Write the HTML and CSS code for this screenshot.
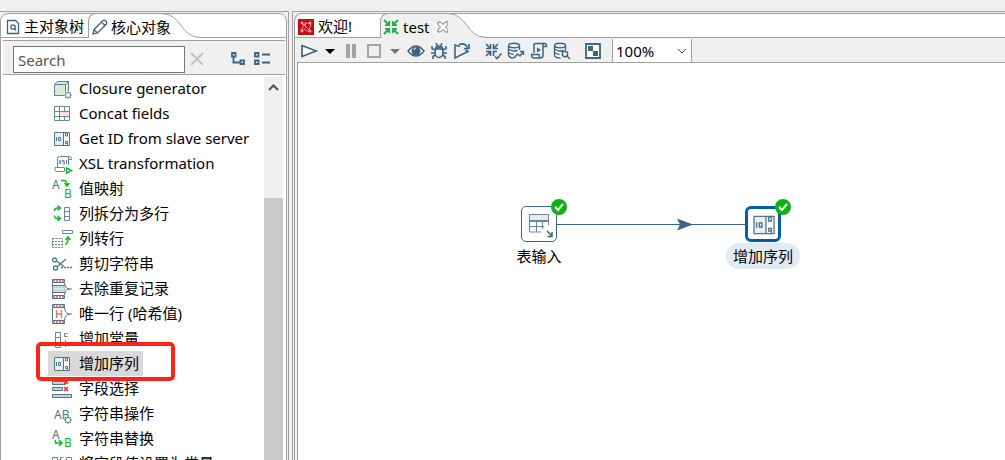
FILE: index.html
```html
<!DOCTYPE html>
<html lang="zh-CN">
<head>
<meta charset="utf-8">
<title>test</title>
<link rel="stylesheet" href="styles.css">
</head>
<body>
<svg class="defs" aria-hidden="true">
  <symbol id="id-box" viewBox="0 0 24 24"><path d="M4.500 5.500h15v13h-15z" fill="#fff"/><path d="M5 6h8v12H5z" fill="#e6eff5"/><path d="M4.500 5.500h15v13h-15zM13.500 5v14" fill="none" stroke="#52758e"/><path d="M6.500 10v4M8.500 10.500h2v3h-2zM15.500 6v3h2V6zM15.500 14.500h2v2h-2zM17.500 14v4" fill="none" stroke="#52758e"/></symbol>
  <symbol id="curve" viewBox="0 0 38 25"><path class="curve-fill" d="M0 .5C20 1 18 24 38 24.500V25H0z"/><path d="M0 .5C20 1 18 24 38 24.500" fill="none" stroke="#a0a0a0"/></symbol>
  <symbol id="curve-over" viewBox="0 0 38 25"><path d="M9 3C19 8 20 24 38 24.500V25H9z" fill="#fff"/><path d="M0 .5C20 1 18 24 38 24.500" fill="none" stroke="#a0a0a0"/></symbol>
  <symbol id="check" viewBox="0 0 16 16"><circle cx="8" cy="8" r="8" fill="#0fb016"/><path d="M4 8l3 3 5-6" fill="none" stroke="#fff" stroke-width="2"/></symbol>
</svg>
<main class="app">
  <section class="side pane">
    <div class="tabs" role="tablist">
      <button class="tab" role="tab"><svg class="ico16" viewBox="0 0 16 16" fill="none" stroke="#3d6480" stroke-width="1.300"><path d="M2.500 1.500h8l3 3v10h-11z"/><circle cx="8" cy="8" r="2.200"/><path d="M9.500 9.500l1.500 2"/></svg>主对象树</button>
      <button class="tab active" role="tab" aria-selected="true"><svg class="ico16" viewBox="0 0 16 16" fill="none" stroke="#3d6480" stroke-width="1.300"><path d="M1 15l1-4.500L11 1.500q1.500-1 3 .5t.5 3L5.500 14zM2 10.500L5.500 14M9.500 3l3.500 3.500"/></svg>核心对象</button>
      <svg class="curve"><use href="#curve-over"/></svg>
    </div>
    <div class="content">
      <div class="searchbar">
        <input class="search" type="text" placeholder="Search" aria-label="Search">
        <button class="tool" aria-label="Clear"><svg class="ico16" viewBox="0 0 16 16"><path d="M2 1l12 12M14 1L2 13" stroke="#c3c3c3" stroke-width="2"/></svg></button>
        <span class="grow"></span>
        <button class="tool" aria-label="Expand all"><svg class="ico16" viewBox="0 0 16 16" fill="none" stroke="#3d6480" stroke-width="1.800"><path d="M2 1h3.500v3.500H2zM10.500 8.500H14V12h-3.500zM3.500 5v5.500h7"/></svg></button>
        <button class="tool" aria-label="Collapse all"><svg class="ico18" viewBox="0 0 18 16" fill="none" stroke="#3d6480" stroke-width="1.800"><path d="M2 1h3.500v3.500H2zM2 8.500h3.500V12H2zM9 2.500h8M9 10.500h8"/></svg></button>
      </div>
      <div class="treewrap">
        <ul class="tree">
          <li><svg viewBox="0 0 24 24" fill="none" stroke="#638196"><path d="M4.500 7.500h11v11h-11zM4.500 7.500l3-3h11v10l-3 4M15.500 7.500l3-3" fill="#d5edd2"/><circle cx="18" cy="18" r="4" fill="#fff" stroke="none"/><circle cx="18" cy="18" r="2.500"/><path d="M18 14v1M18 21v1M14 18h1M21 18h1M15 15l1 1M20 20l1 1M21 15l-1 1M15 21l1-1"/></svg><span>Closure generator</span></li>
          <li><svg viewBox="0 0 24 24" fill="none" stroke="#6a87a0"><path d="M9.500 9.500h10v4h-10z" fill="#ffdede" stroke="none"/><path d="M4.500 4.500h15v14h-15zM4 9.500h16M4 14.500h16M9.500 4v15M14.500 4v5M14.500 14v5"/></svg><span>Concat fields</span></li>
          <li><svg><use href="#id-box"/></svg><span>Get ID from slave server</span></li>
          <li><svg viewBox="0 0 24 24" fill="none" stroke="#6a87a0"><path d="M7.500 15V6.500q0-2 2-2h10q2 0 2 3h-3v-3M18.500 7v6M5 15.500h9M5 15.500q-1 4 2 4h7.500v-4M9 8l2 4M11 8l-2 4M14.500 8.500h-2v1.500h2v2h-2M16.500 8v4"/><path d="M16.500 16l5 2.500-5 2.500z" stroke="#14b722" stroke-width="1.400"/></svg><span>XSL transformation</span></li>
          <li><svg viewBox="0 0 24 24" fill="none"><text x="2" y="12" class="glyph">A</text><text x="14" y="21" class="glyph green">B</text><path d="M11 3.500h3q3 0 3 5M14.500 6l2.500 3 2.500-3" stroke="#14b722" stroke-width="1.500"/></svg><span>值映射</span></li>
          <li><svg viewBox="0 0 24 24" fill="none" stroke="#6a87a0"><path d="M14.500 5.500h5v13h-5zM14 9.500h6M14 14.500h6"/><path d="M4.500 9q0-3 3-3h2M7.500 3.500l3 2.500-3 2.500M4.500 13.500q0 3 3 3h2M7.500 14l3 2.500-3 2.500" stroke="#14b722" stroke-width="1.400"/></svg><span>列拆分为多行</span></li>
          <li><svg viewBox="0 0 24 24" fill="none" stroke="#6a87a0"><path d="M12.500 3.500h10v3h-10z"/><path d="M2.500 11.500h10v9h-10zM2 14.500h11M2 17.500h11" stroke-dasharray="2 1"/><path d="M15 17.500q3-1 3-6M15.500 13l2.500-3 2.500 3" stroke="#14b722" stroke-width="1.500"/></svg><span>列转行</span></li>
          <li><svg viewBox="0 0 24 24" fill="none" stroke="#52758e" stroke-width="1.300"><circle cx="4.500" cy="8" r="2"/><circle cx="5.500" cy="16" r="2"/><path d="M6.500 9L14 14.500M7 15l9-8"/><path d="M11 15.500h11" stroke-dasharray="2 1"/></svg><span>剪切字符串</span></li>
          <li><svg viewBox="0 0 24 24" fill="none" stroke="#52758e"><path d="M2.500 2.500h12v3h-12zM2.500 18.500h12v3h-12z"/><path d="M3 4h11M3 20h11" stroke="#f08080" stroke-width="2" stroke-dasharray="2 1"/><path d="M2.500 6v12M2 8.500h13M2 15.500h13M14.500 6q1 6 5 6-4 0-5 6M19 12h3"/><path d="M3 10h12v4H3z" fill="#52758e" fill-opacity=".2" stroke="#a9bac7"/></svg><span>去除重复记录</span></li>
          <li><svg viewBox="0 0 24 24" fill="none" stroke="#52758e"><path d="M2.500 2.500h12v3h-12zM2.500 18.500h12v3h-12z"/><path d="M3 4h11M3 20h11" stroke="#f08080" stroke-width="2" stroke-dasharray="2 1"/><path d="M2.500 6v12M14.500 6q1 6 5 6-4 0-5 6M19 12h3"/><path d="M6.500 8v8M11.500 8v8M6 12h6" stroke="#e87070" stroke-width="1.300"/></svg><span>唯一行 (哈希值)</span></li>
          <li><svg viewBox="0 0 24 24" fill="none" stroke="#6a87a0"><path d="M5.500 5.500h5v15h-5zM5 10.500h6M5 15.500h6M17.500 6.500h-3v3h3M15.500 13v7"/></svg><span>增加常量</span></li>
          <li class="picked"><svg><use href="#id-box"/></svg><span>增加序列</span><i class="marker"></i></li>
          <li><svg viewBox="0 0 24 24" fill="none" stroke="#52758e"><path d="M2.500 4.500h13v3h-13zM2.500 10.500h10v3h-10zM2.500 17.500h19v3h-19z" fill="#c5d2dc"/><path d="M14 3l4 4M18 3l-4 4M14 10l4 4M18 10l-4 4" stroke="#e52b2b" stroke-width="1.500"/></svg><span>字段选择</span></li>
          <li><svg viewBox="0 0 24 24" fill="none" stroke="#52758e"><text x="4" y="17" class="glyph">AB</text><circle cx="18" cy="18" r="3.500" fill="#fff" stroke="none"/><circle cx="18" cy="18" r="2.500"/><path d="M18 14v1M18 21v1M14 18h1M21 18h1M15 15l1 1M20 20l1 1M21 15l-1 1M15 21l1-1"/></svg><span>字符串操作</span></li>
          <li><svg viewBox="0 0 24 24" fill="none"><text x="2" y="12" class="glyph">A</text><text x="14" y="20" class="glyph green">B</text><path d="M5.500 13v3h6M9 13l3 3-3 3" stroke="#14b722" stroke-width="1.500"/></svg><span>字符串替换</span></li>
          <li><svg viewBox="0 0 24 24" fill="none" stroke="#6a87a0"><path d="M2.500 5.500h5v15h-5zM2 10.500h6M16.500 5.500h5v15h-5zM16 10.500h6M13.500 5.500h-3v3h3"/></svg><span>将字段值设置为常量</span></li>
        </ul>
        <div class="scroll"><svg viewBox="0 0 19 24"><path d="M5 14l4.500-4.500L14 14" fill="none" stroke="#555" stroke-width="2"/></svg><span class="thumb"></span></div>
      </div>
    </div>
  </section>

  <section class="editor pane">
    <div class="tabs" role="tablist">
      <button class="tab" role="tab"><svg class="ico16" viewBox="0 0 16 16"><path d="M0 0h16v16H0z" fill="#c90812"/><path d="M3 4l3 2 3-2 4 1M3 11l3-5 5 5 2-6M3 13l3-3 3 2 4 1M7 3l1 6" fill="none" stroke="#f3b5b8" stroke-width=".8"/><g fill="#c90812" stroke="#fff" stroke-width=".8"><circle cx="4" cy="4" r="1"/><circle cx="12" cy="4" r="1"/><circle cx="4" cy="12" r="1"/><circle cx="12" cy="12" r="1"/></g></svg>欢迎!</button>
      <button class="tab active" role="tab" aria-selected="true"><svg class="ico16" viewBox="0 0 16 16" fill="none" stroke="#23ad4e" stroke-width="1.800"><path d="M1 1l5 5M15 1l-5 5M1 15l5-5M15 15l-5-5M6.200 2v4.200H2M9.800 2v4.200H14M2 9.800h4.200V14M14 9.800H9.800V14"/></svg>test<svg class="close" viewBox="0 0 12 12"><path d="M1 1h2.500L6 3.500 8.500 1H11v2.500L8.500 6 11 8.500V11H8.500L6 8.500 3.500 11H1V8.500L3.500 6 1 3.500z" fill="#fff" stroke="#707070"/></svg></button>
      <svg class="curve"><use href="#curve"/></svg>
    </div>
    <div class="content">
      <div class="toolbar">
        <button class="btn" aria-label="Run"><svg viewBox="0 0 20 20"><path d="M3 4.500l14 5.500-14 5.500z" fill="#fff" stroke="#3d6480" stroke-width="1.700"/></svg></button>
        <button class="drop" aria-label="Run options"><svg viewBox="0 0 20 20"><path d="M5 8h10l-5 5z" fill="#000"/></svg></button>
        <button class="btn" aria-label="Pause"><svg viewBox="0 0 20 20"><path d="M5 3h4v14H5zM11 3h4v14h-4z" fill="#a3a3a3"/></svg></button>
        <button class="btn" aria-label="Stop"><svg viewBox="0 0 20 20"><path d="M4 4h12v12H4z" fill="none" stroke="#a3a3a3" stroke-width="2"/></svg></button>
        <button class="drop" aria-label="Stop options"><svg viewBox="0 0 20 20"><path d="M5 8h10l-5 5z" fill="#777"/></svg></button>
        <button class="btn" aria-label="Preview"><svg viewBox="0 0 20 20"><path d="M2 10q8-10 16 0-8 10-16 0z" fill="#fff" stroke="#3d6480" stroke-width="1.500"/><circle cx="10" cy="10" r="4.500" fill="#3d6480"/><path d="M8 9q0-2 2-2" stroke="#fff" fill="none"/></svg></button>
        <button class="btn" aria-label="Debug"><svg viewBox="0 0 20 20" fill="none" stroke="#3d6480" stroke-width="1.600"><ellipse cx="10" cy="11.500" rx="4" ry="5"/><path d="M6.500 8q0-3 3.500-3t3.500 3zM7 2l1.500 3M13 2l-1.500 3M6 9L3 7.500V5M14 9l3-1.500V5M6 12H2M14 12h4M6.500 14L4 15.500V18M13.500 14l2.500 1.500V18"/></svg></button>
        <button class="btn" aria-label="Replay"><svg viewBox="0 0 20 20" fill="none" stroke="#3d6480" stroke-width="1.600"><path d="M8 5.500L3 4v13l13-6.500-2.500-1.500M7 3.500q6-2 8.500 3M17 3v4.500h-5"/></svg></button>
        <span class="sep"></span>
        <button class="btn" aria-label="Verify"><svg viewBox="0 0 20 20" fill="none" stroke="#3d6480" stroke-width="1.600"><path d="M3 3l4.500 4.500M15 3l-4.500 4.500M3 15l4.500-4.500M7.500 3v4.500H3M10.500 3v4.500H15M3 10.500h4.500V15M10.500 15v-4.500H14M12 15.500l2 2 4.500-5"/></svg></button>
        <button class="btn" aria-label="Impact"><svg viewBox="0 0 20 20" fill="none" stroke="#3d6480" stroke-width="1.400"><ellipse cx="8" cy="4.500" rx="5.500" ry="2.200"/><path d="M2.500 4.500v10q1 2.500 5 2.500M13.500 4.500V9M2.500 8q4 3 9 1.500M2.500 11.500q3 2 5 2M8 17l3.500-4 2.500 2 3-4M14 10.500h3.500V14"/></svg></button>
        <button class="btn" aria-label="SQL"><svg viewBox="0 0 20 20" fill="none" stroke="#3d6480" stroke-width="1.500"><path d="M5 12V4q0-1.500 2-1.500h8.500q2 0 2 3H14v-3M14 5v9q0 3-2.500 3H5q-2.500 0-2.500-3.500H10q0 3.500 2 3.500"/><path d="M8 6.500l4 2.500-4 2.500z" fill="#3d6480" stroke="none"/></svg></button>
        <button class="btn" aria-label="Explore database"><svg viewBox="0 0 20 20" fill="none" stroke="#3d6480" stroke-width="1.400"><ellipse cx="8" cy="4.500" rx="5.500" ry="2.200"/><path d="M2.500 4.500v10q1 2.500 6 2.500M13.500 4.500V9M2.500 8q4 3 9 1.500M2.500 11.500q3 2 5 2"/><circle cx="13" cy="13" r="2.700"/><path d="M15 15l3 3"/></svg></button>
        <span class="sep"></span>
        <button class="btn" aria-label="Show results"><svg viewBox="0 0 20 20"><path d="M3 3h14v14H3z" fill="#fff" stroke="#3d6480" stroke-width="1.800"/><path d="M5 5h5v5H5zM10 10h5v5h-5z" fill="#3d6480"/></svg></button>
        <span class="sep"></span>
        <select class="zoom" aria-label="Zoom"><option>100%</option></select>
      </div>
      <div class="canvas">
        <svg class="hop" viewBox="0 0 190 16"><path d="M0 8.500h190" stroke="#3d6480"/><path d="M121 2.500L137 8.500l-16 6 3-6z" fill="#3d6480"/></svg>
        <div class="node source">
          <div class="box"><svg viewBox="0 0 24 24" fill="none" stroke="#6a87a0"><path d="M2.500 2.500h19v6h-19z" fill="#e5edf3"/><path d="M2.500 2.500h19V13M2.500 2v18H14M2 9.500h19M2 14.500h15M9.500 9v11M15.500 9v8"/><path d="M20 19l5 5M25 20v4.500h-4.500" stroke="#3d6480" stroke-width="1.500"/></svg><svg class="check"><use href="#check"/></svg></div>
          <span class="label">表输入</span>
        </div>
        <div class="node target">
          <div class="box chosen"><svg class="big"><use href="#id-box"/></svg><svg class="check"><use href="#check"/></svg></div>
          <span class="label">增加序列</span>
        </div>
      </div>
    </div>
  </section>
</main>
</body>
</html>
```
FILE: styles.css
```css
* { box-sizing: border-box; }
html, body { height: 100%; }
body {
  margin: 0;
  overflow: hidden;
  background: #f0f0f0;
  color: #000;
  font: 15px/25px "Noto Sans", "Noto Sans CJK SC", sans-serif;
}
button, input, select { font: inherit; color: inherit; }
button { border: 0; padding: 0; background: none; }
svg { display: block; flex: none; overflow: visible; }
.defs { position: absolute; width: 0; height: 0; }

.app {
  display: grid;
  grid-template-columns: 289px 1fr;
  column-gap: 3px;
  height: 100vh;
  padding-top: 11px;
}
.pane {
  display: flex;
  flex-direction: column;
  min-width: 0;
  min-height: 0;
  border-top: 1px solid #a0a0a0;
}
.side { border-right: 1px solid #a0a0a0; padding: 1px 1px 0 0; }
.editor { border-left: 1px solid #a0a0a0; padding: 1px 0 0 1px; }
.content {
  display: flex;
  flex-direction: column;
  flex: 1;
  min-height: 0;
  border-left: 1px solid #a0a0a0;
}
.side .content { border-right: 1px solid #a0a0a0; background: #fff; }

.tabs {
  display: flex;
  flex: none;
  height: 25px;
  background: #fff;
  border: 1px solid #a0a0a0;
  border-radius: 8px 8px 0 0;
}
.editor .tabs { border-right: 0; border-radius: 8px 0 0 0; }
.tab {
  display: flex;
  align-items: center;
  gap: 3px;
  height: 23px;
  padding: 2px 4px 0;
  white-space: nowrap;
}
.tab.active {
  height: 25px;
  margin-top: -1px;
  padding: 2px 0 0 3px;
  border: solid #a0a0a0;
  border-width: 1px 0 0 1px;
  border-radius: 8px 0 0 0;
  background: #fff;
}
.editor .tab { gap: 4px; min-width: 85px; padding-left: 3px; }
.editor .tab.active { min-width: 0; padding-left: 2px; background: #f0f0f0; }
.curve { width: 38px; height: 25px; margin-top: -1px; margin-left: -9px; }
.editor .curve { margin-left: -1px; }
.curve-fill { fill: #f0f0f0; }
.ico16 { width: 16px; height: 16px; }
.ico18 { width: 18px; height: 16px; }
.close { width: 12px; height: 12px; margin-left: 4px; }

.searchbar {
  display: flex;
  align-items: center;
  flex: none;
  height: 37px;
  padding: 7px 13px 0 10px;
  margin: 0 1px 0 2px;
  gap: 4px;
  border-bottom: 1px solid #a0a0a0;
  background: linear-gradient(#fff 2px, #a0a0a0 2px, #a0a0a0 3px, #f0f0f0 3px);
}
.search {
  width: 172px;
  height: 27px;
  padding: 0 4px;
  border: 1px solid #777;
  background: #fff;
}
.search::placeholder { color: #555; opacity: 1; }
.grow { flex: 1; }
.tool { width: 19px; }

.treewrap { display: flex; flex: 1; min-height: 0; padding-right: 3px; }
.tree { flex: 1; min-height: 0; margin: 0; padding: 1px 0 0 47px; overflow: hidden; list-style: none; }
.tree li { display: flex; align-items: center; gap: 5px; width: max-content; height: 25px; padding: 0 4px 0 2px; white-space: nowrap; }
.tree svg { width: 24px; height: 24px; }
.tree .picked { position: relative; background: #d9d9d9; }
.marker {
  position: absolute;
  inset: -9px -32px -5px -12px;
  border: 4px solid #fb2418;
  border-radius: 5px;
}
.glyph { font: 12px "Noto Sans", sans-serif; fill: #52758e; stroke: none; }
.green { fill: #14b722; }
.scroll { display: flex; flex-direction: column; width: 19px; margin-top: 1px; background: #f0f0f0; }
.scroll svg { width: 19px; height: 24px; }
.thumb { flex: 1; margin-top: 98px; background: #c9c9c9; }

.toolbar { display: flex; align-items: center; flex: none; height: 24px; padding: 1px 0 0 2px; }
.btn, .drop { display: flex; justify-content: center; width: 23px; }
.drop { width: 19px; }
.btn svg, .drop svg { width: 20px; height: 20px; }
.sep { width: 8px; }
.zoom {
  width: 80px;
  height: 23px;
  padding: 0 3px;
  appearance: none;
  border: solid #a0a0a0;
  border-width: 0 1px;
  border-radius: 0;
  background: #fff url("data:image/svg+xml,%3Csvg xmlns='http://www.w3.org/2000/svg' width='10' height='6'%3E%3Cpath d='M1 1l4 4 4-4' fill='none' stroke='%23444'/%3E%3C/svg%3E") no-repeat right 4px center;
}
.canvas {
  position: relative;
  flex: 1;
  margin-left: 2px;
  border: solid #a0a0a0;
  border-width: 1px 0 0 1px;
  background: #fff;
}
.hop { position: absolute; left: 258px; top: 153px; width: 190px; height: 16px; }
.node { position: absolute; top: 143px; display: flex; flex-direction: column; align-items: center; width: 90px; }
.source { left: 196px; }
.target { left: 420px; }
.box {
  position: relative;
  display: grid;
  place-items: center;
  width: 36px;
  height: 36px;
  border: 1px solid #3d6480;
  border-radius: 5px;
  background: #fff;
}
.chosen { border: 3px solid #005da6; border-radius: 6px; }
.box svg { width: 24px; height: 24px; }
.box .big { width: 32px; height: 32px; }
.box .check { position: absolute; right: -11px; top: -8px; width: 16px; height: 16px; }
.chosen .check { right: -13px; top: -10px; }
.label { margin-top: 1px; padding: 1px 7px 0; border-radius: 13px; white-space: nowrap; }
.target .label { background: #e1ebf5; }
```
